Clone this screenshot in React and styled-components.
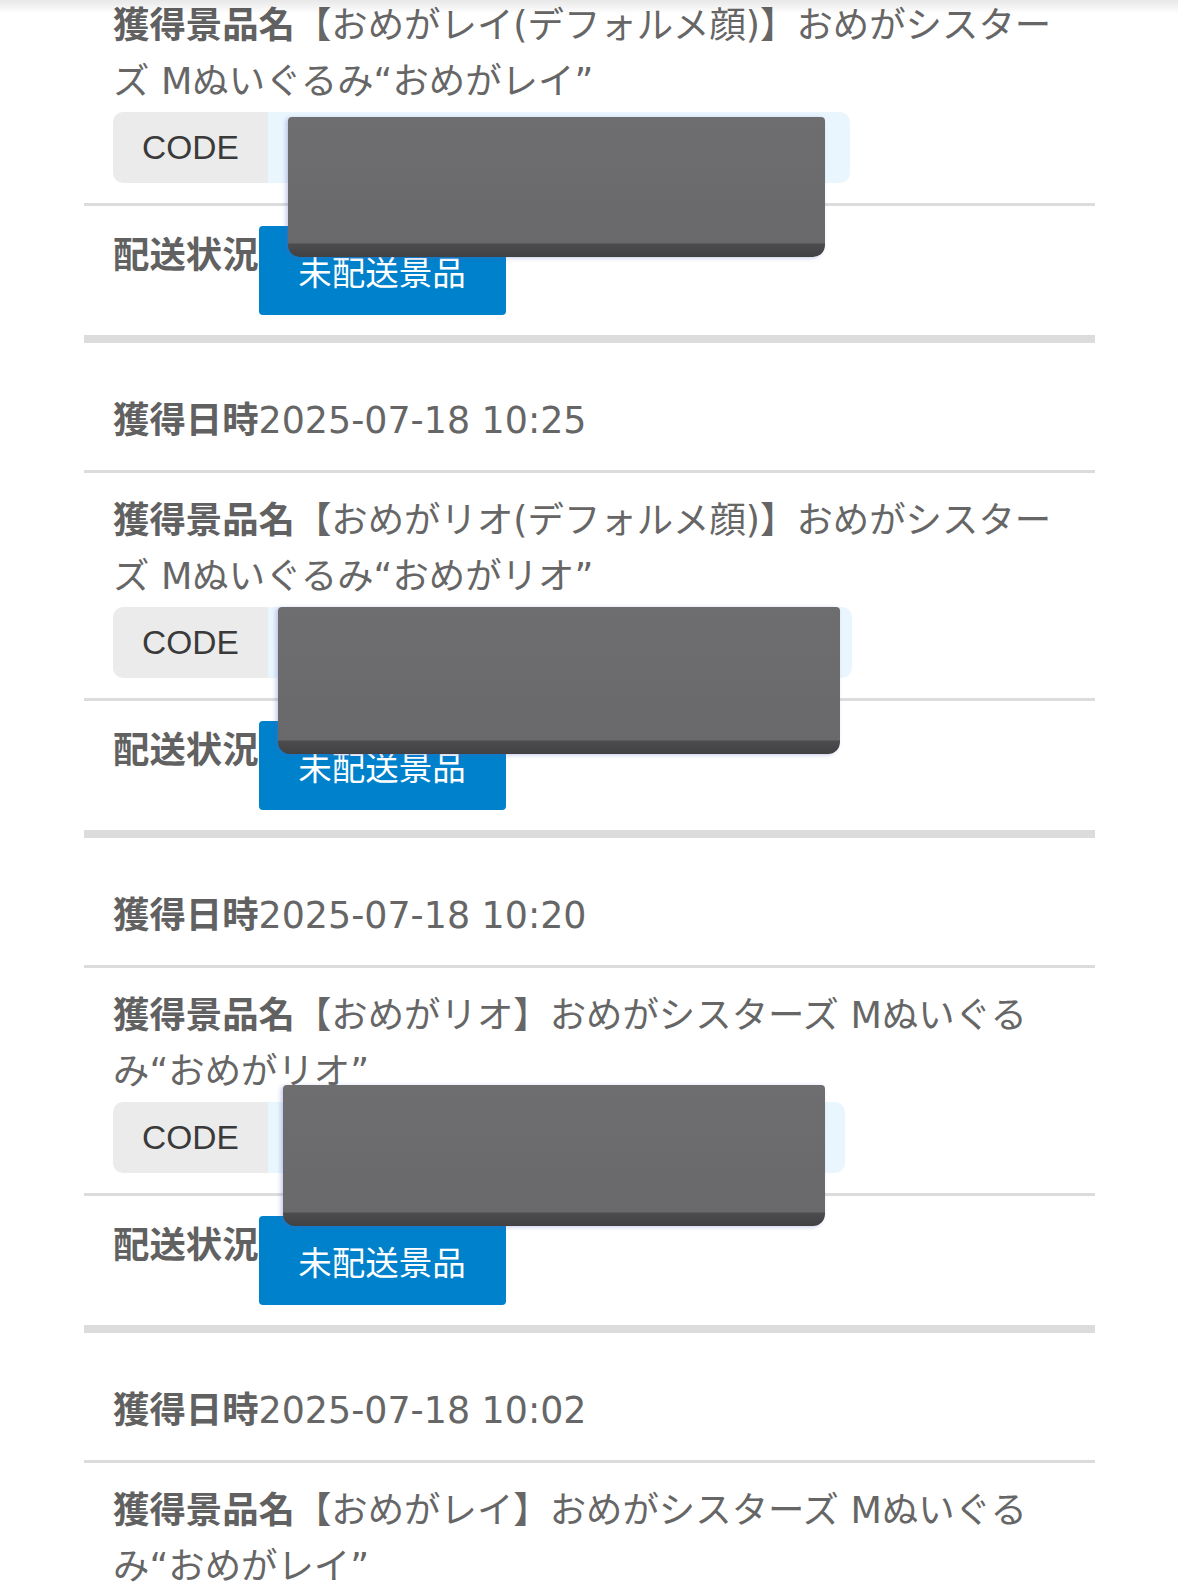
import React from 'react';
import styled, { createGlobalStyle } from 'styled-components';

const GlobalStyle = createGlobalStyle`
  html, body {
    margin: 0;
    padding: 0;
    background: #fff;
  }
  body {
    font-family: "DejaVu Sans", "Noto Sans CJK JP", sans-serif;
    color: #666;
  }
`;

const TopShade = styled.div`
  position: fixed;
  top: 0;
  left: 0;
  right: 0;
  height: 14px;
  background: linear-gradient(to bottom, rgba(0, 0, 0, 0.09), rgba(0, 0, 0, 0));
  pointer-events: none;
  z-index: 10;
`;

const Page = styled.div`
  width: 1011px;
  margin-left: 84px;
`;

const Card = styled.section`
  padding-top: ${(p) => (p.$cut ? '0' : '29px')};
  border-bottom: 8px solid #dcdcdc;
`;

const Row = styled.div`
  padding: ${(p) => p.$pad || '20px'} 29px;
  border-bottom: ${(p) => (p.$last ? 'none' : '3px solid #dcdcdc')};
  font-size: 36.4px;
  line-height: 56px;
  color: #666;
`;

// one text line, kept at a fixed height so the mixed fonts do not grow it
const Line = styled.div`
  height: 56px;
  white-space: nowrap;
`;

const Label = styled.span`
  font-family: "Noto Sans CJK JP", sans-serif;
  font-weight: 700;
  line-height: 1;
  color: #616161;
`;

const Title = styled.div`
  margin-top: ${(p) => (p.$cut ? '-2px' : '0')};
`;

const CodeBox = styled.div`
  position: relative;
  display: flex;
  width: ${(p) => p.$w}px;
  height: 71px;
  margin-top: 2px;
  border-radius: 10px;
`;

const CodeLabel = styled.div`
  width: 155px;
  display: flex;
  align-items: center;
  justify-content: center;
  background: #ebebeb;
  border-radius: 10px 0 0 10px;
  font-family: "Liberation Sans", Arial, sans-serif;
  font-size: 33.5px;
  color: #3a3a3a;
`;

const CodeField = styled.div`
  flex: 1;
  background: #eaf6fe;
  border-radius: 0 10px 10px 0;
`;

const Redaction = styled.div`
  position: absolute;
  top: ${(p) => p.$top}px;
  left: ${(p) => p.$left}px;
  width: ${(p) => p.$w}px;
  height: ${(p) => p.$h}px;
  border-radius: 4px 4px 12px 12px;
  background: linear-gradient(
    to bottom,
    #6e6e70 0,
    #69696b calc(100% - 14px),
    #4c4c4e calc(100% - 13px),
    #414143 100%
  );
  box-shadow: -2px 1px 4px rgba(90, 100, 190, 0.35);
  z-index: 5;
`;

const StatusRow = styled.div`
  display: flex;
  align-items: flex-start;
  height: 89px;
`;

const StatusLabel = styled(Label)`
  line-height: 52px;
`;

const StatusButton = styled.div`
  width: 247px;
  height: 89px;
  display: flex;
  align-items: center;
  justify-content: center;
  background: #0081cb;
  border-radius: 4px;
  color: #fff;
  font-family: "Noto Sans CJK JP", sans-serif;
  font-size: 33.5px;
  line-height: 1;
`;

const records = [
  {
    cut: true,
    lines: ['【おめがレイ(デフォルメ顔)】おめがシスター', 'ズ Mぬいぐるみ“おめがレイ”'],
    codeW: 737,
    mask: { top: 5, left: 175, w: 537, h: 140 },
  },
  {
    date: '2025-07-18 10:25',
    lines: ['【おめがリオ(デフォルメ顔)】おめがシスター', 'ズ Mぬいぐるみ“おめがリオ”'],
    codeW: 739,
    mask: { top: 0, left: 165, w: 562, h: 147 },
  },
  {
    date: '2025-07-18 10:20',
    lines: ['【おめがリオ】おめがシスターズ Mぬいぐる', 'み“おめがリオ”'],
    codeW: 732,
    mask: { top: -17, left: 170, w: 542, h: 141 },
  },
  {
    date: '2025-07-18 10:02',
    lines: ['【おめがレイ】おめがシスターズ Mぬいぐる', 'み“おめがレイ”'],
    codeW: 732,
    mask: null,
  },
];

function Record({ r }) {
  return (
    <Card $cut={r.cut}>
      {r.date && (
        <Row $pad="21px">
          <Line>
            <Label>獲得日時</Label>
            {r.date}
          </Line>
        </Row>
      )}
      <Row style={r.cut ? { paddingTop: 0 } : undefined}>
        <Title $cut={r.cut}>
          <Line>
            <Label>獲得景品名</Label>
            {r.lines[0]}
          </Line>
          <Line>{r.lines[1]}</Line>
        </Title>
        <CodeBox $w={r.codeW}>
          <CodeLabel>CODE</CodeLabel>
          <CodeField />
          {r.mask && (
            <Redaction $top={r.mask.top} $left={r.mask.left} $w={r.mask.w} $h={r.mask.h} />
          )}
        </CodeBox>
      </Row>
      <Row $last>
        <StatusRow>
          <StatusLabel>配送状況</StatusLabel>
          <StatusButton>未配送景品</StatusButton>
        </StatusRow>
      </Row>
    </Card>
  );
}

export default function App() {
  return (
    <>
      <GlobalStyle />
      <TopShade />
      <Page>
        {records.map((r, i) => (
          <Record key={i} r={r} />
        ))}
      </Page>
    </>
  );
}
